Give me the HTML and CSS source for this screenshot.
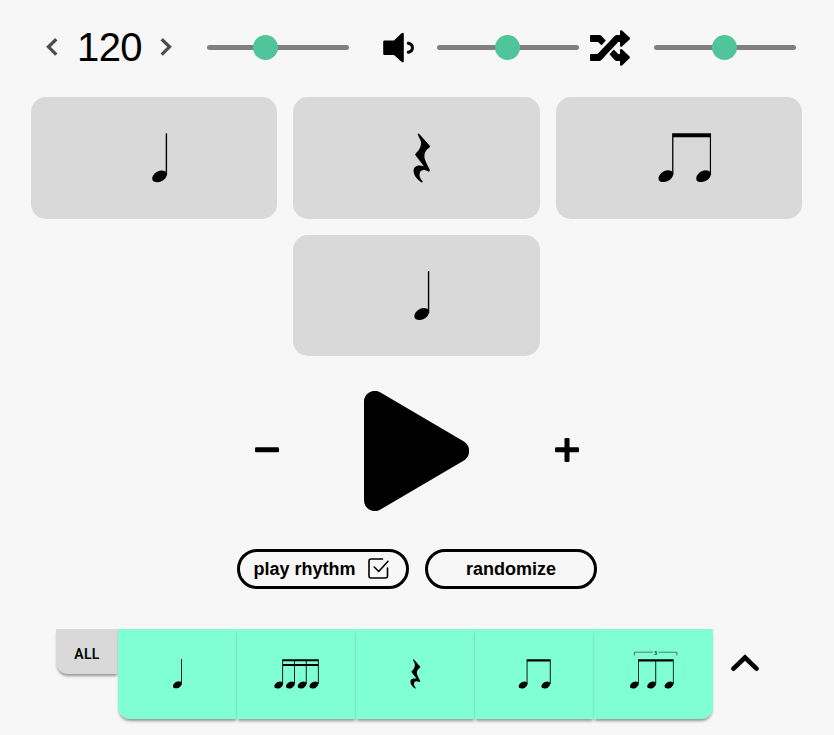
FILE: index.html
```html
<!DOCTYPE html>
<html lang="en">
<head>
<meta charset="utf-8">
<title>Rhythm randomizer</title>
<link rel="stylesheet" href="styles.css">
</head>
<body>
<svg class="defs" width="0" height="0">
  <defs>
    <symbol id="head" viewBox="-8 -7 16 14" overflow="visible"><path d="M-7.3 2.7C-7.6-1.2-2.8-5.9 2.2-5.9C5.2-5.9 7.3-4.6 7.3-2.1C7.3 2 2.6 5.9-2 5.9C-5 5.9-7.1 5-7.3 2.7Z"/></symbol>
    <symbol id="quarter" viewBox="0 0 16 50" overflow="visible"><use href="#head" x="0" y="36" width="16" height="14"/><path d="M14.2 0h1.4v42H14.2z"/></symbol>
    <symbol id="rest" viewBox="0 0 17 50" overflow="visible"><path d="M4.3.2Q5.3-.2 6.4 1L16.4 12.3Q16.9 13 16.3 13.8Q10.2 18.4 11 23.5Q11.4 27 16.3 36Q17 38 15.3 38.2C10.5 35.2 6.6 36.5 6.2 40.5C5.9 43.5 7.4 45.7 9.3 48Q9.5 49 8.3 49C3.5 46 0 41.4.2 37C.6 32.1 5.2 31.2 10.5 32.7L1.9 21.5Q1.5 20.5 2.3 20C6.6 16.2 8.4 11.5 7.4 7.5C6.9 5.2 4.2 2 4.3.2Z"/></symbol>
  </defs>
</svg>
<main class="app">
  <header class="toolbar">
    <div class="tempo">
      <svg class="chevron" viewBox="0 0 12 20"><path d="M10.3 2.2 2.5 9.8l7.8 7.8"/></svg>
      <span class="bpm">120</span>
      <svg class="chevron" viewBox="0 0 12 20"><path d="m1.7 2.2 7.8 7.6-7.8 7.8"/></svg>
    </div>
    <div class="slider tempo-slider"><span class="thumb"></span></div>
    <svg class="speaker" viewBox="0 0 32 32"><path d="M1.5 8.5H11L18.5 1.3Q20.8-.2 20.8 2V29Q20.8 31.3 18.5 29.7L11 23H1.5Q.2 23 .2 21.7V9.8Q.2 8.5 1.5 8.5Z"/><path class="wave" d="M25.3 11.3C30.8 12.3 30.8 19.2 25.3 20.2"/></svg>
    <div class="slider volume-slider"><span class="thumb"></span></div>
    <svg class="shuffle" viewBox="0 0 40 36"><path d="M1 5H9.5Q10.6 5 11.3 5.8L15.8 10.5L11.5 15.2L8 12H1Q0 12 0 11V6Q0 5 1 5ZM0 25Q0 24 1 24H7.5L24.7 5.9Q25.6 5 26.8 5H30V1.5Q30-.4 32 .5L39.6 7.6Q40.3 8.5 39.6 9.4L32 16.5Q30 17.2 30 15.4V12H28.2L11.3 30.1Q10.5 31 9.2 31H1Q0 31 0 30ZM23.8 19.5L28.2 24H30V20.4Q30 18.5 32 19.3L39.6 26.4Q40.3 27.3 39.6 28.2L32 35.4Q30 36.3 30 34.4V31H26.8Q25.5 31 24.7 30.1L19.5 24.3Z"/></svg>
    <div class="slider shuffle-slider"><span class="thumb"></span></div>
  </header>

  <section class="beats">
    <div class="beat"><svg viewBox="31 97 246.33 121.5"><use href="#quarter" x="151.5" y="133.3" width="16" height="50"/></svg></div>
    <div class="beat"><svg viewBox="293.33 97 246.33 121.5"><use href="#rest" x="413.7" y="133.5" width="17" height="50"/></svg></div>
    <div class="beat"><svg viewBox="555.67 97 246.33 121.5"><use href="#head" x="657.5" y="169.2" width="16" height="14"/><use href="#head" x="695.2" y="169.2" width="16" height="14"/><path d="M671.8 133.3h38.9V175h-1.2V137.3h-36.4V175h-1.3z"/></svg></div>
    <div class="beat"><svg viewBox="293.33 234.5 246.33 121.5"><use href="#quarter" x="414" y="270.5" width="16" height="50"/></svg></div>
  </section>

  <section class="transport">
    <svg class="sign" viewBox="0 0 24 24"><rect y="9.3" width="24" height="5" rx="1.3"/></svg>
    <svg class="play" viewBox="0 0 105 120"><path d="M0 10.8A10.8 10.8 0 0 1 16.5 1.6L99.5 50.3A11.2 11.2 0 0 1 99.5 69.7L16.5 118.4A10.8 10.8 0 0 1 0 109.2Z"/></svg>
    <svg class="sign" viewBox="0 0 24 24"><rect y="9.3" width="24" height="5" rx="1.3"/><rect x="9.5" width="5" height="24" rx="1.3"/></svg>
  </section>

  <section class="actions">
    <button class="pill">play rhythm <svg class="check" viewBox="0 0 21 21"><path d="M14.5 1H3Q1 1 1 3V18Q1 20 3 20H17.5Q19.5 20 19.5 18V10M6.2 9l4.5 4.5L20 3.3"/></svg></button>
    <button class="pill">randomize</button>
  </section>

  <section class="palette">
    <button class="all">ALL</button>
    <div class="patterns">
      <div class="pattern"><svg viewBox="118 629 119 90"><use href="#quarter" x="172.6" y="659" width="9.6" height="30"/></svg></div>
      <div class="pattern"><svg viewBox="237 629 119 90"><use href="#head" x="273.9" y="680.8" width="9.6" height="8.4"/><use href="#head" x="285.6" y="680.8" width="9.6" height="8.4"/><use href="#head" x="297.3" y="680.8" width="9.6" height="8.4"/><use href="#head" x="309.1" y="680.8" width="9.6" height="8.4"/><path d="M282.3 659.2h36.5v2h-36.5zM282.3 664h36.5v2h-36.5zM282.2 659.2h.9V684h-.9zM294 659.2h.9V684h-.9zM305.8 659.2h.9V684h-.9zM317.9 659.2h.9V684h-.9z"/></svg></div>
      <div class="pattern"><svg viewBox="356 629 119 90"><use href="#rest" x="410.3" y="659.2" width="10.2" height="30"/></svg></div>
      <div class="pattern"><svg viewBox="475 629 119 90"><use href="#head" x="518.3" y="680.8" width="9.6" height="8.4"/><use href="#head" x="541" y="680.8" width="9.6" height="8.4"/><path d="M526.6 659.2h24.1V684h-.9V661.5h-22.3V684h-.9z"/></svg></div>
      <div class="pattern"><svg viewBox="594 629 119 90"><use href="#head" x="629.5" y="680.8" width="9.6" height="8.4"/><use href="#head" x="646.8" y="680.8" width="9.6" height="8.4"/><use href="#head" x="664.2" y="680.8" width="9.6" height="8.4"/><path d="M638 659.2h35.7V684h-.8V661.5h-16.7V684h-.9V661.5h-16.5V684h-.8z"/><path class="bracket" d="M634.5 655.5v-3.3h18.3M658.3 652.2h18.6v3.3"/><text class="tuplet" x="655.6" y="654.6">3</text></svg></div>
    </div>
    <svg class="up" viewBox="0 0 28 18"><path d="M2.5 14.7 14 3.5l11.5 11.2"/></svg>
  </section>
</main>
</body>
</html>
```
FILE: styles.css
```css
* { box-sizing: border-box; }
body {
  margin: 0;
  background: #f7f7f7;
  color: #000;
  font-family: "Liberation Sans", Arial, sans-serif;
}
svg { display: block; flex: none; }
.defs { position: absolute; }
.app { width: 834px; height: 735px; overflow: hidden; }
.toolbar { display: flex; align-items: center; height: 95px; padding-left: 46px; }
.tempo { display: flex; align-items: center; justify-content: space-between; width: 126px; margin-bottom: 1px; }
.chevron { width: 12px; height: 20px; fill: none; stroke: #4d4d4d; stroke-width: 3.3; }
.bpm { font-size: 40px; line-height: 46px; letter-spacing: -0.6px; margin: 0 -1px 1px 0; }
.slider { display: flex; align-items: center; width: 142px; height: 5px; border-radius: 3px; background: #808080; }
.thumb { width: 25px; height: 25px; border-radius: 50%; background: #50c49a; }
.tempo-slider { margin-left: 35px; padding-left: 46px; }
.speaker { width: 32px; height: 32px; margin: 1px 0 0 34px; }
.wave { fill: none; stroke: #000; stroke-width: 3; stroke-linecap: round; }
.volume-slider { margin-left: 22px; padding-left: 58px; }
.shuffle { width: 40px; height: 36px; margin: 1px 0 0 11px; }
.shuffle-slider { margin-left: 24px; padding-left: 58px; }
.beats { display: flex; flex-wrap: wrap; justify-content: center; gap: 16px; width: 771px; margin: 2px 0 0 31px; }
.beat { width: 246.33px; height: 121.5px; border-radius: 15px; background: #d9d9d9; }
.beat svg, .pattern svg { width: 100%; height: 100%; }
.transport { display: flex; align-items: center; width: 324px; height: 120px; margin: 35px 0 0 254.8px; }
.sign { width: 24px; height: 24px; margin-bottom: 2px; }
.play { width: 105px; height: 120px; margin: 0 86px 0 85px; }
.actions { display: flex; gap: 16px; margin: 38px 0 0 237px; }
.pill {
  display: flex;
  align-items: center;
  justify-content: center;
  gap: 12px;
  width: 172px;
  height: 40px;
  padding: 0 4px 0 0;
  border: 3px solid #000;
  border-radius: 20px;
  background: transparent;
  color: #000;
  font: bold 18px "Liberation Sans", Arial, sans-serif;
}
.pill:last-child { padding: 0; }
.check { width: 21px; height: 21px; margin-bottom: 1px; fill: none; stroke: #000; stroke-width: 1.6; stroke-linecap: round; stroke-linejoin: round; }
.palette { display: flex; align-items: flex-start; margin: 40px 0 0 56px; }
.all {
  width: 62px;
  height: 45px;
  padding: 5px 0 0;
  border: 0;
  border-radius: 0 0 0 12px;
  background: #d9d9d9;
  color: #000;
  box-shadow: 0 3px 3px -1px rgba(0, 0, 0, .4);
  font: 600 14px Roboto, sans-serif;
  letter-spacing: .3px;
}
.patterns { display: flex; position: relative; }
.pattern { width: 119px; height: 90px; background: #80ffd4; box-shadow: 0 3px 3px -1px rgba(0, 0, 0, .4); }
.pattern:not(:last-child) { box-shadow: 0 3px 3px -1px rgba(0, 0, 0, .4), inset -1px 0 #7bfad0; }
.pattern:first-child { border-radius: 0 0 0 12px; }
.pattern:last-child { border-radius: 0 0 12px 0; }
.bracket { fill: none; stroke: #000; stroke-width: .5; }
.tuplet { font: bold 6px "Liberation Serif", serif; text-anchor: middle; }
.up { width: 28px; height: 18px; margin: 25px 0 0 18px; fill: none; stroke: #000; stroke-width: 4.6; stroke-linecap: round; }
```
